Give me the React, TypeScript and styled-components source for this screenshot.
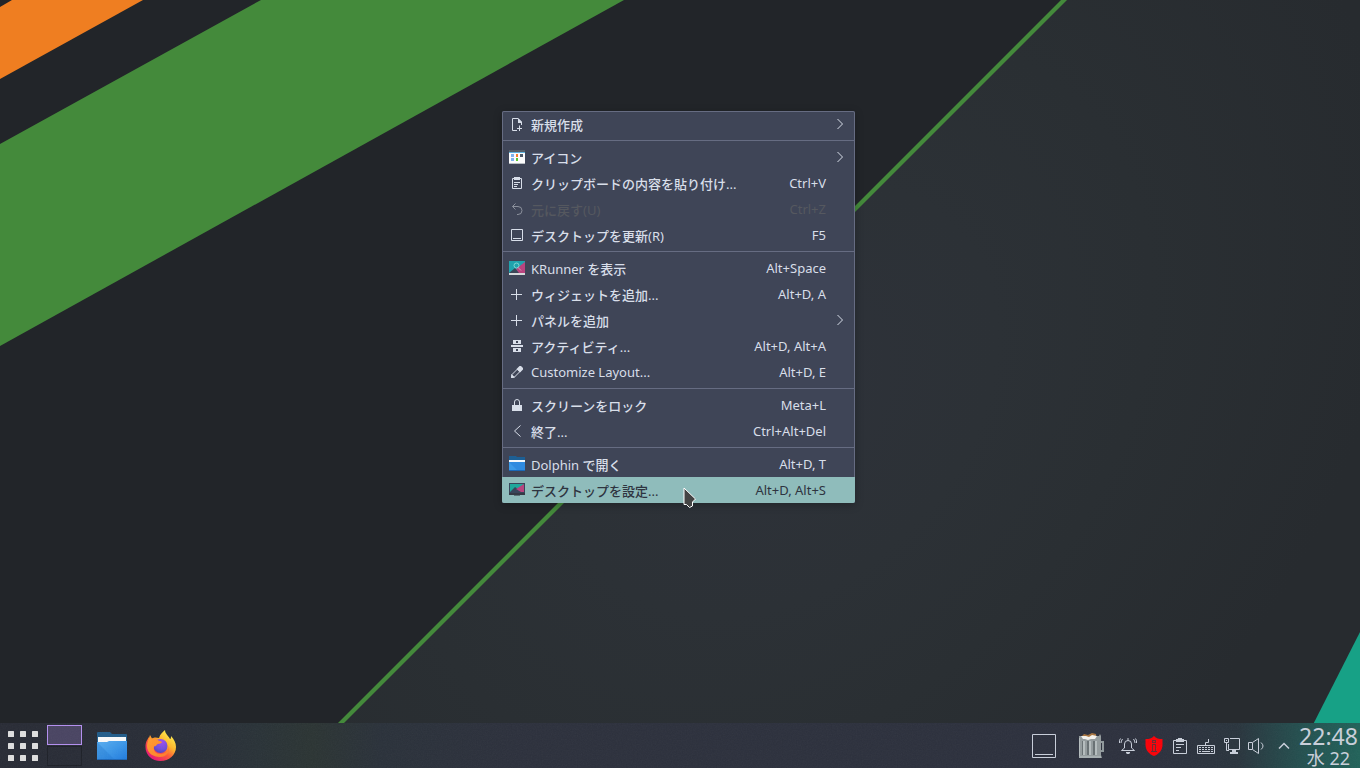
import React from 'react';
import styled, { createGlobalStyle, css } from 'styled-components';

const GlobalStyle = createGlobalStyle`
  * { box-sizing: border-box; }
  body {
    margin: 0;
    background: #222529;
    font-family: "Noto Sans", "Noto Sans CJK JP", sans-serif;
    overflow: hidden;
  }
  button { font: inherit; color: inherit; border: 0; padding: 0; background: none; }
`;

const Desktop = styled.div`
  position: relative;
  display: flex;
  flex-direction: column;
  height: 100vh;
  overflow: hidden;
`;

const WallpaperArt = styled.svg`
  position: absolute;
  inset: 0;
  width: 100%;
  height: 100%;
`;

const Workspace = styled.main`
  flex: 1;
  position: relative;
`;

const Menu = styled.div`
  position: absolute;
  left: 502px;
  top: 111px;
  width: 353px;
  border-radius: 2px;
  overflow: hidden;
  background: #3f4557;
  box-shadow: inset 0 0 0 1px #666c82, 0 2px 8px rgba(0, 0, 0, 0.25);
`;

const MenuRule = styled.hr`
  height: 1px;
  margin: 3px 0;
  border: 0;
  background: #666c82;
`;

const MenuRow = styled.button<{ $active?: boolean }>`
  display: flex;
  align-items: center;
  gap: 6px;
  width: 100%;
  height: 26px;
  padding: 0 7px;
  font-size: 13px;
  line-height: 18px;
  text-align: left;
  white-space: nowrap;
  color: #d8dee9;
  ${(p) => p.$active && css`background: #8fbcbb; color: #2e3440;`}
  &:disabled { color: #55585f; }
`;

const MenuLabel = styled.span<{ $japanese: boolean }>`
  flex: 1;
  padding-top: ${(p) => (p.$japanese ? 2 : 0)}px;
`;

const Japanese = styled.span`
  font-family: "Noto Sans CJK JP", sans-serif;
  font-weight: 500;
`;

const Glyph = styled.svg`
  display: block;
  flex: none;
  width: 16px;
  height: 16px;
  fill: none;
  stroke: none;
`;

const Pointer = styled.svg`
  position: absolute;
  left: 682px;
  top: 486px;
  width: 16px;
  height: 24px;
`;

const Panel = styled.footer`
  position: relative;
  display: flex;
  align-items: center;
  height: 45px;
  color: #c9cfda;
  background: linear-gradient(90deg, #282b35 0, #282d37 14%, #293237 19%, #2b3433 23%, #2a313a 28%, #2c303c 38%, #2c303d 85%, #29343d 91%, #235150 96%, #216259 100%);
`;

const PanelNoise = styled.svg`
  position: absolute;
  inset: 0;
  width: 100%;
  height: 100%;
  opacity: 0.05;
  pointer-events: none;
`;

const Launcher = styled.button`
  display: grid;
  place-items: center;
  width: 46px;
  height: 45px;
`;

const Pager = styled.div`
  display: flex;
  flex-direction: column;
  gap: 1px;
  width: 35px;
  margin: 0 7px 0 1px;
`;

const PagerPage = styled.button<{ $current?: boolean }>`
  height: 20px;
  border: 1px solid ${(p) => (p.$current ? '#b48ff0' : '#1d2028')};
  background: ${(p) => (p.$current ? '#494462' : 'transparent')};
`;

const TaskList = styled.nav`
  display: flex;
  flex: 1;
  gap: 4px;
`;

const Task = styled.button`
  display: grid;
  place-items: center;
  width: 45px;
  height: 45px;
`;

const Applets = styled.div`
  display: flex;
  gap: 16px;
  margin-right: 9px;
`;

const Applet = styled.button`
  display: grid;
  place-items: center;
  width: 32px;
  height: 45px;
`;

const Tray = styled.div`
  display: flex;
  gap: 4px;
`;

const TrayButton = styled.button`
  display: grid;
  place-items: center;
  width: 22px;
  height: 45px;
`;

const Clock = styled.button`
  display: flex;
  flex-direction: column;
  align-items: center;
  width: 65px;
  height: 45px;
  padding-left: 2px;
`;

const Time = styled.time`
  font-size: 23px;
  line-height: 27px;
`;

const DateLine = styled.span`
  font-size: 18px;
  line-height: 16px;
`;

const Wallpaper = () => (
  <WallpaperArt viewBox="0 0 1360 768" preserveAspectRatio="xMidYMid slice" aria-hidden="true">
    <defs>
      <radialGradient id="sheen" gradientUnits="userSpaceOnUse" cx="0" cy="0" r="1" gradientTransform="translate(780 400) rotate(-45) scale(700 520)">
        <stop offset="0" stopColor="#2e323a" />
        <stop offset="0.35" stopColor="#2c3136" />
        <stop offset="0.6" stopColor="#2a2f33" />
        <stop offset="1" stopColor="#272b2f" />
      </radialGradient>
    </defs>
    <rect width="1360" height="768" fill="#222529" />
    <path d="M1064 0H1360V768H296Z" fill="url(#sheen)" />
    <path d="M0 7L12 0H143L0 79Z" fill="#ef7e21" />
    <path d="M0 144L261 0H624L0 346Z" fill="#448a3b" />
    <path d="M1061 0H1067L299 768H293Z" fill="#448a3b" />
    <path d="M1360 632V768H1291Z" fill="#17a186" />
  </WallpaperArt>
);

const line = { stroke: 'currentColor', strokeWidth: 1 };

const NewFileIcon = () => (
  <Glyph viewBox="0 0 16 16">
    <path {...line} d="M8 14.5H3.5V2.5H9L12.5 6V9" />
    <path fill="currentColor" d="M9 2L13 6V7H9Z" />
    <path {...line} d="M10.5 9.500V15M8 12.500H13" />
  </Glyph>
);

const IconsViewIcon = () => (
  <Glyph viewBox="0 0 16 16">
    <path fill="#566069" d="M0 1h16v3H0z" />
    <path fill="#5fb4e0" d="M0 3h16v1H0z" />
    <path fill="#fcfcfc" d="M0 4h16v11H0z" />
    <path fill="#b9bec3" d="M0 14h16v1H0z" />
    <path fill="#7fb2ec" d="M2 5h3v3H2zM2 9h3v3H2z" />
    <path fill="#f67c2c" d="M7 5h2v3H7z" />
    <path fill="#5bc82e" d="M7 9h2v3H7z" />
    <path fill="#4d5a68" d="M11 5h3v3h-3z" />
  </Glyph>
);

const ClipboardIcon = () => (
  <Glyph viewBox="0 0 16 16">
    <path {...line} d="M3.5 3.500h9v10h-9z" />
    <path fill="currentColor" d="M5 2h6v3H5z" />
    <path {...line} d="M5 7.500h6M5 9.500h4M5 11.500h3" />
  </Glyph>
);

const UndoIcon = () => (
  <Glyph viewBox="0 0 16 16">
    <path stroke="#8b909c" d="M6.500 2.500L3.500 5.500L6.500 8.500M3.500 5.500H9A4 4 0 0 1 9 13.500H8" />
  </Glyph>
);

const DesktopOutlineIcon = () => (
  <Glyph viewBox="0 0 16 16">
    <path {...line} d="M2.500 2.500h11v11h-11zM4 11.500h8" />
  </Glyph>
);

const KRunnerIcon = () => (
  <Glyph viewBox="0 0 16 16">
    <path fill="#1fa3ad" d="M0 1h16v12H0z" />
    <path fill="#b8447f" d="M16 2V13H9L7 9Z" />
    <path fill="#3b4657" d="M0 13L6 8L10 13Z" />
    <path fill="#d5d8da" d="M0 13h16v2H0z" />
    <circle cx="7.500" cy="5.500" r="2.500" stroke="#7fd6d2" />
    <path stroke="#d99bbf" d="M9 7.500L12 10.500" />
  </Glyph>
);

const PlusIcon = () => (
  <Glyph viewBox="0 0 16 16">
    <path {...line} d="M7.500 3v11M2 8.500h11" />
  </Glyph>
);

const ActivitiesIcon = () => (
  <Glyph viewBox="0 0 16 16">
    <path fill="currentColor" fillRule="evenodd" d="M4 2h8v4H4zM7 3v2h2V3zM2 7h12v2H2zM4 10h8v4H4zM7 11v2h2v-2z" />
  </Glyph>
);

const PencilIcon = () => (
  <Glyph viewBox="0 0 16 16">
    <path {...line} d="M3 10.500L8.500 5L11 7.500L5.500 13L2.500 13.500Z" />
    <path fill="currentColor" d="M7.500 5L10.500 2H12L14 4V5.500L11 8.500ZM2 14L2.500 10L6 13.500Z" />
  </Glyph>
);

const LockIcon = () => (
  <Glyph viewBox="0 0 16 16">
    <path fill="currentColor" d="M3 8h10v6H3z" />
    <path {...line} d="M5.500 8V5a2.500 2.500 0 0 1 5 0V8" />
  </Glyph>
);

const LeaveIcon = () => (
  <Glyph viewBox="0 0 16 16">
    <path {...line} d="M11.500 2.500L5.500 8L11.500 13.500" />
  </Glyph>
);

const SubmenuArrow = () => (
  <Glyph viewBox="0 0 16 16">
    <path {...line} d="M5.500 3L10.500 8L5.500 13" />
  </Glyph>
);

const SmallFolderIcon = () => (
  <Glyph viewBox="0 0 16 16">
    <path fill="#1d5f94" d="M0 0h7l1 1h8v8H0z" />
    <path fill="#f4f8fb" d="M0 4h16v2H0z" />
    <path fill="#3b9ae8" d="M0 6h16v9H0z" />
    <path fill="#2b85dd" d="M0 6L9 15H16V6Z" opacity="0.7" />
    <path fill="#1a68b8" d="M0 14h16v1H0z" />
  </Glyph>
);

const DesktopSettingsIcon = () => (
  <Glyph viewBox="0 0 16 16">
    <path fill="#39465a" d="M0 1h16v11H0z" />
    <path fill="#1fa89c" d="M1 2H15L9 7L6 5L1 10Z" />
    <path fill="#b8447f" d="M15 2V10H12L7 7Z" />
    <path fill="#353a45" d="M0 11h16v2H0z" />
    <path fill="#5b7377" d="M5 13h6v1H5z" />
  </Glyph>
);

type Entry = {
  label: string;
  icon: React.ComponentType;
  keys?: string;
  submenu?: boolean;
  disabled?: boolean;
  active?: boolean;
};

const groups: Entry[][] = [
  [{ label: '新規作成', icon: NewFileIcon, submenu: true }],
  [
    { label: 'アイコン', icon: IconsViewIcon, submenu: true },
    { label: 'クリップボードの内容を貼り付け...', icon: ClipboardIcon, keys: 'Ctrl+V' },
    { label: '元に戻す(U)', icon: UndoIcon, keys: 'Ctrl+Z', disabled: true },
    { label: 'デスクトップを更新(R)', icon: DesktopOutlineIcon, keys: 'F5' },
  ],
  [
    { label: 'KRunner を表示', icon: KRunnerIcon, keys: 'Alt+Space' },
    { label: 'ウィジェットを追加...', icon: PlusIcon, keys: 'Alt+D, A' },
    { label: 'パネルを追加', icon: PlusIcon, submenu: true },
    { label: 'アクティビティ...', icon: ActivitiesIcon, keys: 'Alt+D, Alt+A' },
    { label: 'Customize Layout...', icon: PencilIcon, keys: 'Alt+D, E' },
  ],
  [
    { label: 'スクリーンをロック', icon: LockIcon, keys: 'Meta+L' },
    { label: '終了...', icon: LeaveIcon, keys: 'Ctrl+Alt+Del' },
  ],
  [
    { label: 'Dolphin で開く', icon: SmallFolderIcon, keys: 'Alt+D, T' },
    { label: 'デスクトップを設定...', icon: DesktopSettingsIcon, keys: 'Alt+D, Alt+S', active: true },
  ],
];

const japaneseRun = /([\u3000-\u9fff]+)/;

const Label = ({ text }: { text: string }) => (
  <MenuLabel $japanese={japaneseRun.test(text)}>
    {text.split(japaneseRun).map((run, i) => (i % 2 ? <Japanese key={i}>{run}</Japanese> : run))}
  </MenuLabel>
);

const ContextMenu = () => (
  <Menu role="menu">
    {groups.map((entries, g) => (
      <React.Fragment key={g}>
        {g > 0 && <MenuRule />}
        {entries.map(({ label, icon: Icon, keys, submenu, disabled, active }) => (
          <MenuRow key={label} role="menuitem" disabled={disabled} $active={active}>
            <Icon />
            <Label text={label} />
            {keys && <span>{keys}</span>}
            {submenu ? <SubmenuArrow /> : <Glyph viewBox="0 0 16 16" />}
          </MenuRow>
        ))}
      </React.Fragment>
    ))}
  </Menu>
);

const FolderIcon = () => (
  <svg width="30" height="30" viewBox="0 0 30 30" aria-hidden="true">
    <defs>
      <linearGradient id="folder" x1="0" y1="0" x2="1" y2="1">
        <stop offset="0" stopColor="#5aaef0" />
        <stop offset="0.5" stopColor="#3c97e8" />
        <stop offset="1" stopColor="#1f7ade" />
      </linearGradient>
    </defs>
    <path fill="#215c8a" d="M0 2q0-1 1-1h12l2 2h14q1 0 1 1v11H0z" />
    <path fill="#f8f9fa" d="M1 6h28v8H1z" />
    <path fill="url(#folder)" d="M0 11h10l2-1h18v18q0 1-1 1H1q-1 0-1-1z" />
    <path fill="#1f75cf" opacity="0.35" d="M0 11L17 28H0z" />
    <path fill="#1c65b4" d="M0 28h30q0 1-1 1H1q-1 0-1-1z" />
  </svg>
);

const FirefoxIcon = () => (
  <svg width="31" height="32" viewBox="0 0 31 32" aria-hidden="true">
    <defs>
      <linearGradient id="flame" x1="0.85" y1="0.1" x2="0.2" y2="0.95">
        <stop offset="0" stopColor="#fff14f" />
        <stop offset="0.35" stopColor="#ffb52a" />
        <stop offset="0.6" stopColor="#ff5a36" />
        <stop offset="1" stopColor="#e4107c" />
      </linearGradient>
      <radialGradient id="globe" cx="0.6" cy="0.2" r="0.9">
        <stop offset="0" stopColor="#a04cf0" />
        <stop offset="0.6" stopColor="#6e4ddb" />
        <stop offset="1" stopColor="#4a3fb4" />
      </radialGradient>
      <linearGradient id="fox" x1="0" y1="0" x2="1" y2="1">
        <stop offset="0" stopColor="#ffa12e" />
        <stop offset="1" stopColor="#ff7a2c" />
      </linearGradient>
    </defs>
    <path fill="url(#flame)" d="M20 0C20 4 24 6 25 9C26 9 26 7 26 6C29 9 31 13 31 17C31 25 24 31 15.500 31C7 31 0.500 25 0.500 17C0.500 12 2 10 4 7L4.500 9L7 9C9 7 11 7.500 14 8C15 4 18 2 20 0Z" />
    <circle cx="15.500" cy="16" r="7" fill="url(#globe)" />
    <path fill="url(#fox)" d="M5 5L7 8.500C9 8 11 9 12 9.500C14 11 16 11 17 12C16 14 13 13.500 12 14.500C11 16 10 16 9 16.500C8 21 11 24 16 24C21 24 24 20 23.500 16C26 22 21 27 15 27C8 27 2 23 2 16C2 12 4 9 5 5Z" />
  </svg>
);

const TrashIcon = () => (
  <svg width="26" height="26" viewBox="0 0 26 26" aria-hidden="true">
    <path fill="none" stroke="#8f989b" strokeWidth="2" d="M20 9h4v9h-3" />
    <path fill="#939b9d" d="M0 3h20l1-2 1 2v19l1 3H0z" />
    <path fill="#a8743f" d="M3 3L5 1l4 1 4-2 4 1v3H3z" />
    <path fill="#f5f3ee" d="M2 3h5l3 1 3-2 5 1-2 3h-4l-3 1-3-1H4z" />
    <path fill="#b5bdbe" d="M0 5h1v19H0zM4 8h2v14H4zM10 8h2v14h-2zM16 8h2v14h-2z" />
    <path fill="#687073" d="M3 8h1v14H3zM8 8h2v14H8zM14 8h2v14h-2z" />
    <path fill="#a7afb1" d="M0 23h22v2H0z" />
  </svg>
);

const BellIcon = () => (
  <svg width="22" height="22" viewBox="0 0 22 22" aria-hidden="true" fill="none" stroke="currentColor">
    <path d="M4.500 15.500H17.500L14.500 13V9A3.500 3.500 0 0 0 7.500 9V13ZM11 3V5.500" />
    <path d="M5.500 4Q4 6 4 8M3.500 3.500Q2 5 2.500 8M16.500 4Q18 6 18 8M18.500 3.500Q20 5 19.500 8" />
    <path fill="currentColor" stroke="none" d="M9 17h4v1l-1 1h-2l-1-1z" />
  </svg>
);

const ShieldIcon = () => (
  <svg width="22" height="22" viewBox="0 0 22 22" aria-hidden="true">
    <path fill="#fb0007" d="M11 1C13 3.500 16 4 19.500 4V10C19.500 15 16 19 11 21C6 19 2.500 15 2.500 10V4C6 4 9 3.500 11 1Z" />
    <path fill="#6b2a31" fillRule="evenodd" d="M9 5h4v3H9zM10 6v1h2V6zM9 9h4v7h1v1H8v-1h1zM10 10v6h2v-6z" />
  </svg>
);

const TrayClipboardIcon = () => (
  <svg width="22" height="22" viewBox="0 0 22 22" aria-hidden="true" fill="none" stroke="currentColor">
    <path d="M4.500 5.500h13v13h-13z" />
    <path fill="currentColor" stroke="none" d="M9 3h4v1h2v3H7V4h2z" />
    <path d="M7 9.500h8M7 12.500h5M7 15.500h3" />
  </svg>
);

const KeyboardIcon = () => (
  <svg width="22" height="22" viewBox="0 0 22 22" aria-hidden="true" fill="none" stroke="currentColor">
    <path d="M2.500 10.500h17v8h-17zM10.500 10V7.500H13.500V4" />
    <path d="M4 12.500h14M4 14.500h14" strokeDasharray="2 1" />
    <path d="M4 16.500h2M7 16.500h8M16 16.500h2" />
  </svg>
);

const NetworkIcon = () => (
  <svg width="22" height="22" viewBox="0 0 22 22" aria-hidden="true" fill="none" stroke="currentColor">
    <path d="M9 3.500H18.500V14.500H7.500V9M3.500 3.500h4v4h-4zM5.500 8V15.500H8" />
    <path fill="currentColor" stroke="none" d="M5 5h1v1H5zM11 15h4v2h2v2H9v-2h2z" />
  </svg>
);

const VolumeIcon = () => (
  <svg width="22" height="22" viewBox="0 0 22 22" aria-hidden="true" fill="none" stroke="currentColor">
    <path d="M5 7.500H1.500V14.500H5M5.500 7.500V14.500L11.500 18.500V3.500Z" />
    <path d="M14 7.500Q18 11 14 14.500" />
  </svg>
);

const ExpandIcon = () => (
  <svg width="22" height="22" viewBox="0 0 22 22" aria-hidden="true" fill="none" stroke="currentColor">
    <path strokeWidth="1.500" d="M6 13.500L11 8.500L16 13.500" />
  </svg>
);

const tray = [
  { name: '通知', icon: BellIcon },
  { name: 'セキュリティ', icon: ShieldIcon },
  { name: 'クリップボード', icon: TrayClipboardIcon },
  { name: 'キーボード', icon: KeyboardIcon },
  { name: 'ネットワーク', icon: NetworkIcon },
  { name: '音量', icon: VolumeIcon },
  { name: '隠れているアイコンを表示', icon: ExpandIcon },
];

const LauncherDots = () => (
  <svg width="30" height="30" viewBox="0 0 30 30" aria-hidden="true" fill="#dfdfdf">
    {[0, 12, 24].map((y) =>
      [0, 12, 24].map((x) => <rect key={`${x}-${y}`} x={x} y={y} width="6" height="6" rx="0.500" />)
    )}
  </svg>
);

export default function App() {
  return (
    <Desktop>
      <GlobalStyle />
      <Wallpaper />
      <Workspace>
        <ContextMenu />
        <Pointer viewBox="0 0 16 24" aria-hidden="true">
          <path d="M2 2V18.500H4.500L7.500 21.500L10.500 20V16L13.500 13Z" fill="#444" stroke="#fff" strokeLinejoin="round" />
        </Pointer>
      </Workspace>
      <Panel>
        <PanelNoise aria-hidden="true">
          <filter id="grain">
            <feTurbulence type="fractalNoise" baseFrequency="0.8" numOctaves={2} />
            <feColorMatrix type="saturate" values="0" />
          </filter>
          <rect width="100%" height="100%" filter="url(#grain)" />
        </PanelNoise>
        <Launcher aria-label="アプリケーション"><LauncherDots /></Launcher>
        <Pager>
          <PagerPage $current aria-label="デスクトップ 1" />
          <PagerPage aria-label="デスクトップ 2" />
        </Pager>
        <TaskList>
          <Task aria-label="Dolphin"><FolderIcon /></Task>
          <Task aria-label="Firefox"><FirefoxIcon /></Task>
        </TaskList>
        <Applets>
          <Applet aria-label="デスクトップを表示">
            <svg width="24" height="24" viewBox="0 0 24 24" aria-hidden="true" fill="none" stroke="currentColor">
              <path d="M0.500 0.500h23v23h-23zM3 20.500h18" />
            </svg>
          </Applet>
          <Applet aria-label="ゴミ箱"><TrashIcon /></Applet>
        </Applets>
        <Tray>
          {tray.map(({ name, icon: Icon }) => (
            <TrayButton key={name} aria-label={name}><Icon /></TrayButton>
          ))}
        </Tray>
        <Clock>
          <Time>22:48</Time>
          <DateLine>水 22</DateLine>
        </Clock>
      </Panel>
    </Desktop>
  );
}
